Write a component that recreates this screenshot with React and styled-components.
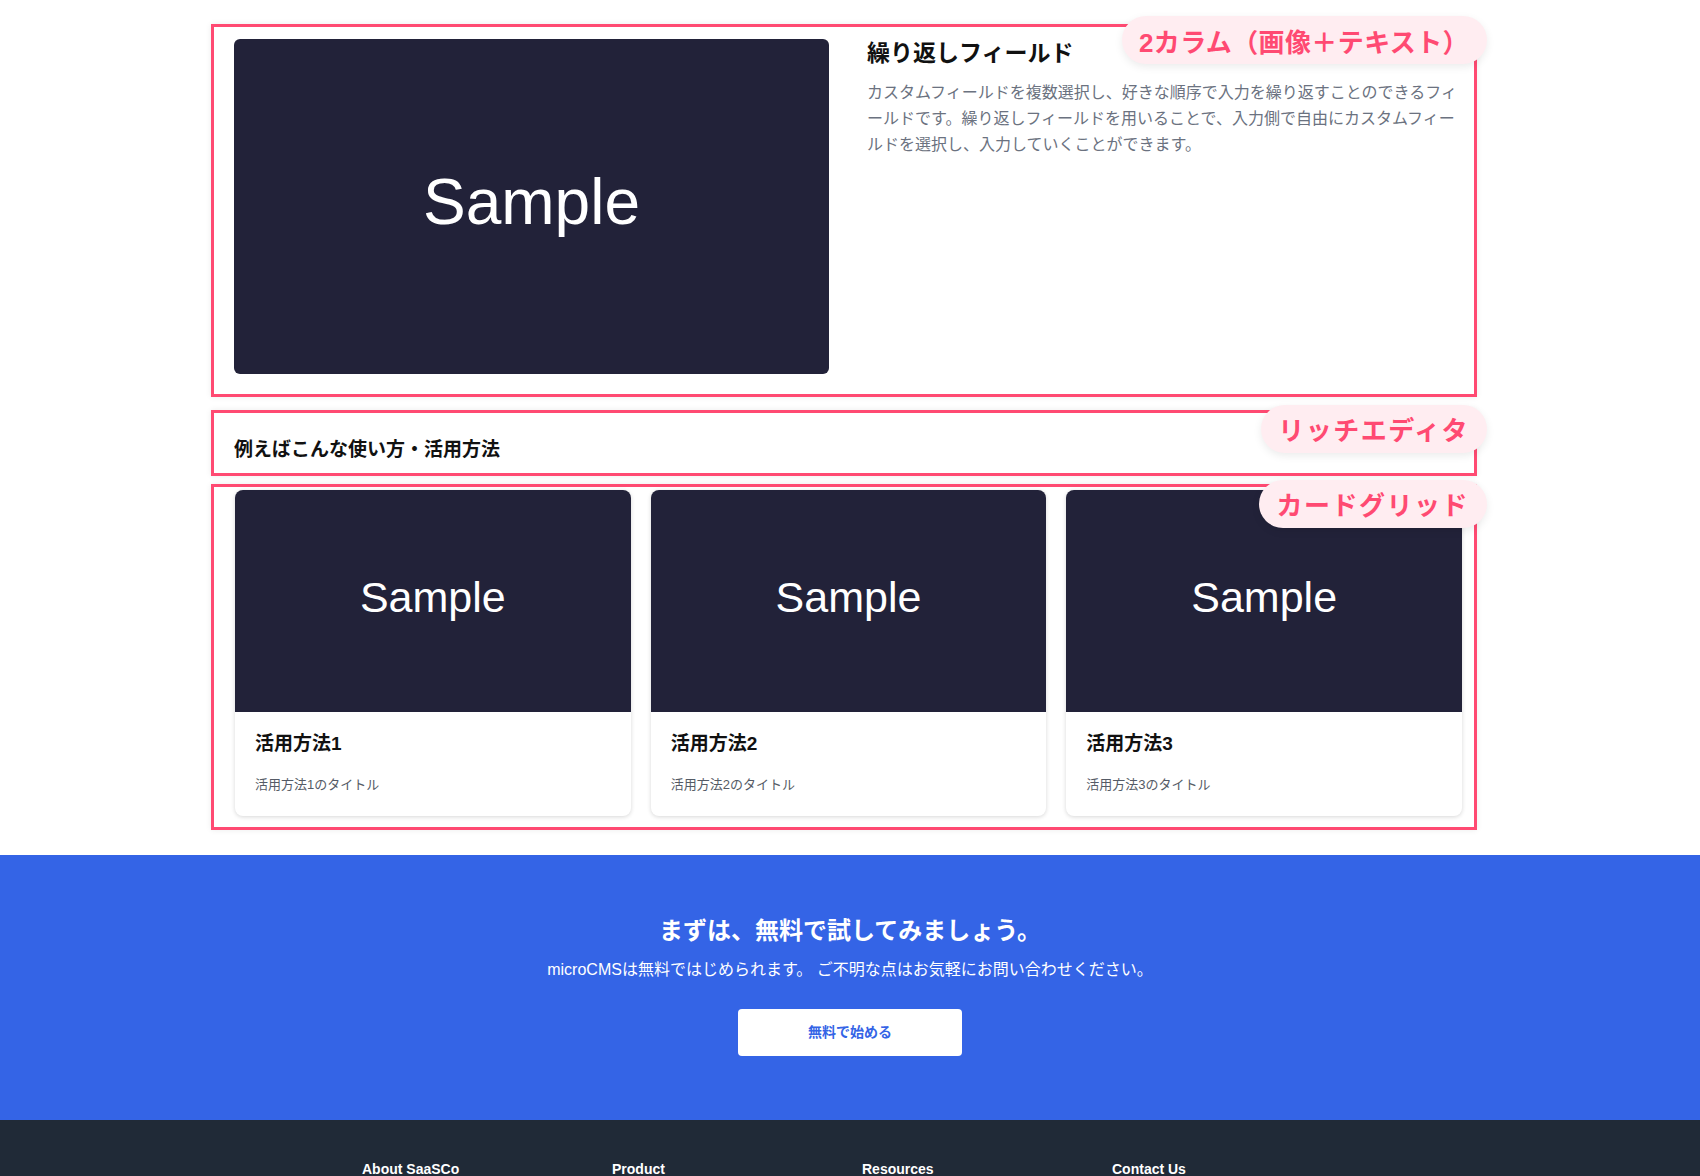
import styled, { createGlobalStyle } from 'styled-components';

const GlobalStyle = createGlobalStyle`
    body {
        margin: 0;
        background: #FFFFFF;
        font-family: "Liberation Sans", "Noto Sans CJK JP", sans-serif;
        color: #111111;
    }
`;

const Main = styled.main`
    width: 1266px;
    margin-left: calc(50% - 639px);
    padding: 24px 0 25px;
    display: flex;
    flex-direction: column;
`;

const Block = styled.section`
    position: relative;
    border: 3px solid #ff4a72;
    box-shadow: 0 0 6px rgba(0, 0, 0, 0.08);
    padding: ${p => p.$pad};
    margin-top: ${p => p.$gap || 0}px;
`;

const Tag = styled.span`
    position: absolute;
    top: ${p => p.$top}px;
    right: -13px;
    height: 48px;
    padding: 0 18px 0 17px;
    display: flex;
    align-items: center;
    border-radius: 24px;
    background: #ffedf1;
    color: #ff4a72;
    font-size: 26px;
    font-weight: 700;
    letter-spacing: ${p => p.$spacing}px;
    box-shadow: 0 3px 8px rgba(0, 0, 0, 0.08);
    white-space: nowrap;
`;

const TwoColumn = styled.div`
    display: grid;
    grid-template-columns: 1fr 1fr;
    gap: 38px;
`;

const Thumb = styled.div`
    aspect-ratio: 16 / 9;
    background: #222239;
    border-radius: ${p => p.$radius || 0};
    display: flex;
    align-items: center;
    justify-content: center;
    color: #FFFFFF;
    font-family: "Liberation Sans", Arial, sans-serif;
    font-size: ${p => p.$size}px;
    padding-bottom: ${p => p.$lift || 0}px;
    box-sizing: border-box;
`;

const FieldTitle = styled.h3`
    margin: 0;
    padding-top: 2px;
    font-size: 23px;
    line-height: 24px;
    font-weight: 700;
`;

const FieldText = styled.p`
    margin: 15px 0 0;
    font-size: 16px;
    line-height: 26px;
    color: #6b7280;
`;

const SectionTitle = styled.h2`
    margin: 0;
    font-size: 19px;
    line-height: 28px;
    font-weight: 700;
`;

const CardGrid = styled.div`
    display: grid;
    grid-template-columns: repeat(3, 1fr);
    gap: 20px;
`;

const Card = styled.article`
    border-radius: 8px;
    overflow: hidden;
    background: #FFFFFF;
    box-shadow: 0 1px 4px rgba(0, 0, 0, 0.16);
`;

const CardBody = styled.div`
    padding: 21px 20px 21px;
`;

const CardTitle = styled.h4`
    margin: 0;
    font-size: 19px;
    line-height: 22px;
    font-weight: 700;
`;

const CardText = styled.p`
    margin: 20px 0 0;
    font-size: 13px;
    line-height: 20px;
    color: #555b66;
`;

const Cta = styled.section`
    background: #3464e6;
    color: #FFFFFF;
    text-align: center;
    padding: 58px 0 64px;
`;

const CtaTitle = styled.h2`
    margin: 0;
    font-size: 24px;
    line-height: 36px;
    font-weight: 700;
`;

const CtaText = styled.p`
    margin: 9px 0 0;
    font-size: 16px;
    line-height: 24px;
`;

const CtaButton = styled.button`
    margin-top: 27px;
    width: 224px;
    height: 47px;
    padding: 0 0 3px;
    border: none;
    border-radius: 4px;
    background: #FFFFFF;
    color: #3464e6;
    font-family: inherit;
    font-size: 14px;
    font-weight: 700;
    cursor: pointer;
`;

const Footer = styled.footer`
    background: #202a37;
    color: #FFFFFF;
    padding: 40px 0 60px;
`;

const FooterGrid = styled.div`
    display: grid;
    grid-template-columns: repeat(4, 250px);
    margin-left: calc(50% - 488px);
`;

const FooterHead = styled.h5`
    margin: 0;
    font-size: 14px;
    line-height: 18px;
    font-weight: 700;
`;

const usages = [1, 2, 3];

const footerCols = ['About SaaSCo', 'Product', 'Resources', 'Contact Us'];

function App() {
    return (
        <>
            <GlobalStyle />
            <Main>
                <Block $pad="12px 12px 20px 20px">
                    <Tag $top={-11} $spacing={0.4}>2カラム（画像＋テキスト）</Tag>
                    <TwoColumn>
                        <Thumb $radius="6px" $size={64} $lift={8}>Sample</Thumb>
                        <div>
                            <FieldTitle>繰り返しフィールド</FieldTitle>
                            <FieldText>
                                カスタムフィールドを複数選択し、好きな順序で入力を繰り返すことのできるフィールドです。繰り返しフィールドを用いることで、入力側で自由にカスタムフィールドを選択し、入力していくことができます。
                            </FieldText>
                        </div>
                    </TwoColumn>
                </Block>

                <Block $pad="23px 12px 9px 20px" $gap={13}>
                    <Tag $top={-8} $spacing={1.5}>リッチエディタ</Tag>
                    <SectionTitle>例えばこんな使い方・活用方法</SectionTitle>
                </Block>

                <Block $pad="3px 12px 11px 21px" $gap={8}>
                    <Tag $top={-7} $spacing={1.5}>カードグリッド</Tag>
                    <CardGrid>
                        {usages.map(n => (
                            <Card key={n}>
                                <Thumb $size={43} $lift={6}>Sample</Thumb>
                                <CardBody>
                                    <CardTitle>活用方法{n}</CardTitle>
                                    <CardText>活用方法{n}のタイトル</CardText>
                                </CardBody>
                            </Card>
                        ))}
                    </CardGrid>
                </Block>
            </Main>

            <Cta>
                <CtaTitle>まずは、無料で試してみましょう。</CtaTitle>
                <CtaText>microCMSは無料ではじめられます。 ご不明な点はお気軽にお問い合わせください。</CtaText>
                <CtaButton>無料で始める</CtaButton>
            </Cta>

            <Footer>
                <FooterGrid>
                    {footerCols.map(head => (
                        <FooterHead key={head}>{head}</FooterHead>
                    ))}
                </FooterGrid>
            </Footer>
        </>
    );
}

export default App;
